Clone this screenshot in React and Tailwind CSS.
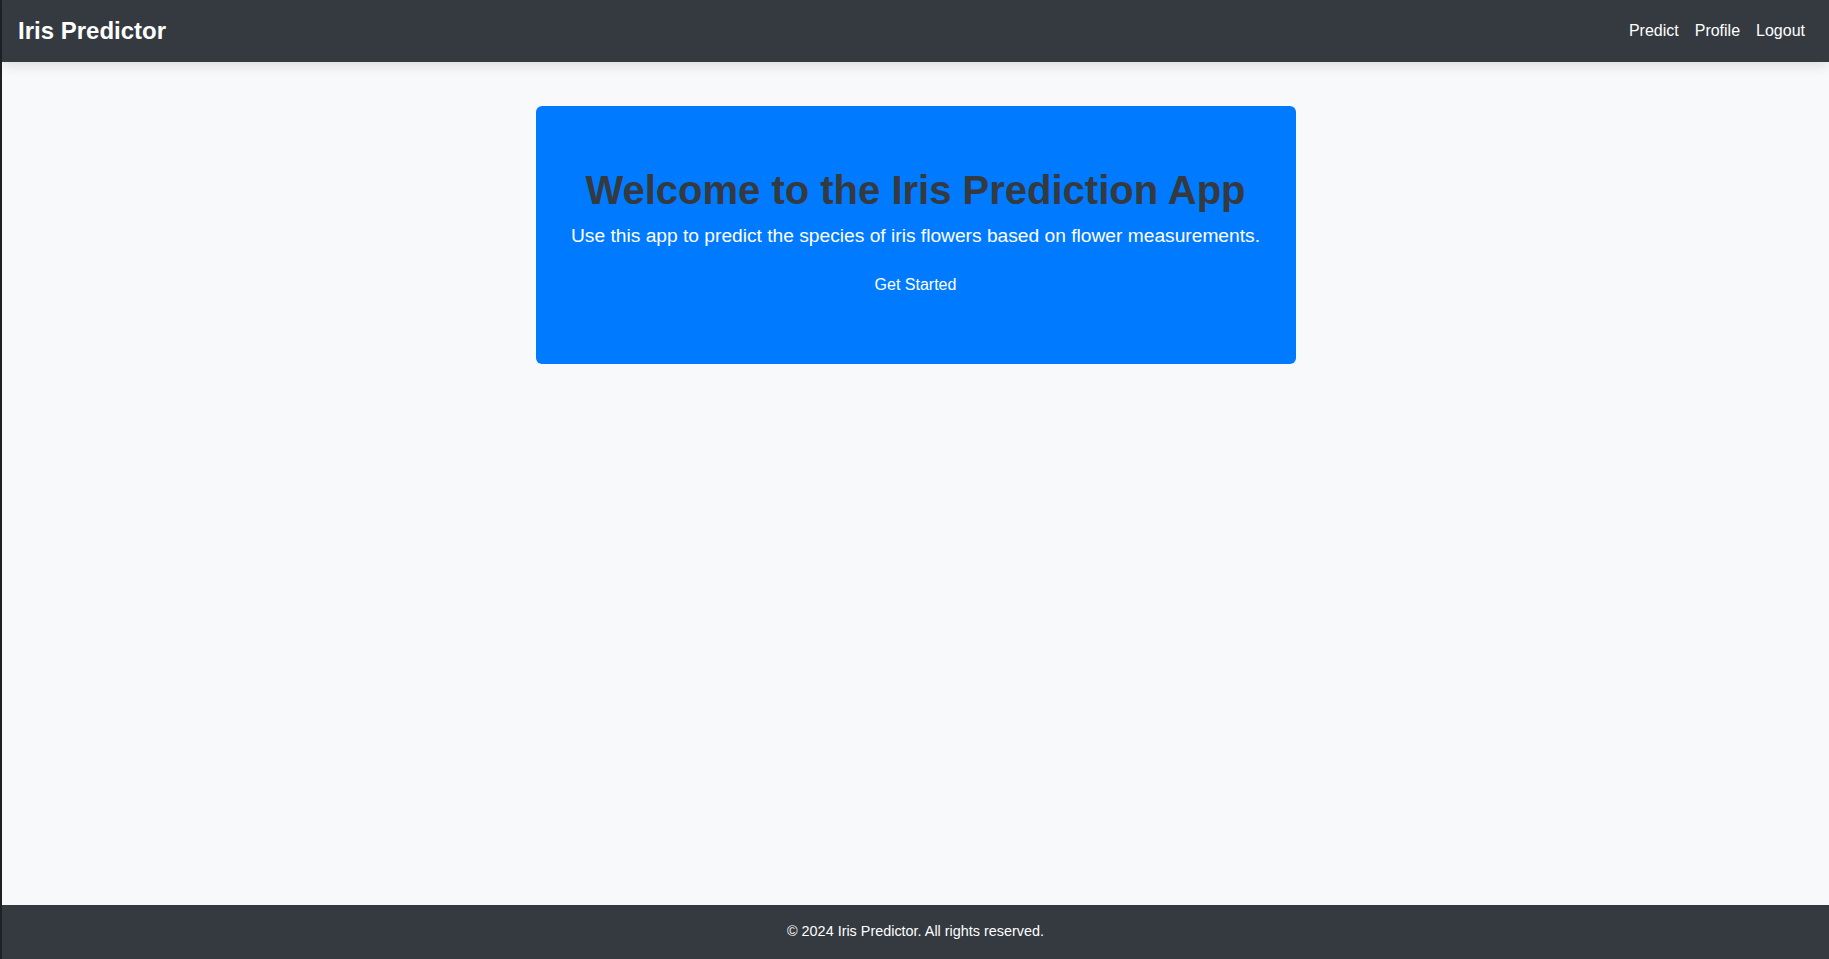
export default function App() {
  return (
    <div
      className="flex h-[959px] flex-col border-l-2 border-[#1f2123] bg-[#f8f9fa]"
      style={{ fontFamily: '"Liberation Sans", Arial, sans-serif' }}
    >
      <nav className="relative z-10 flex h-[62px] shrink-0 items-center justify-between bg-[#343a40] pl-4 pr-6 shadow-[0_3px_12px_rgba(0,0,0,0.12)]">
        <a href="#" className="text-[24px] font-bold text-white">Iris Predictor</a>
        <div className="flex items-center gap-4 text-[16px] text-white">
          <a href="#">Predict</a>
          <a href="#">Profile</a>
          <a href="#">Logout</a>
        </div>
      </nav>

      <main className="flex-1">
        <div className="mx-auto mt-[44px] w-[760px] rounded-md bg-[#007bff] px-4 pt-[60px] pb-[61px] text-center">
          <h1 className="mb-[7px] text-[40px] font-bold leading-[1.2] text-[#343a40]">
            Welcome to the Iris Prediction App
          </h1>
          <p className="mb-4 whitespace-nowrap text-[19.2px] leading-[30px] text-white">
            Use this app to predict the species of iris flowers based on flower measurements.
          </p>
          <button className="px-3 py-1.5 text-[16px] leading-6 text-white">Get Started</button>
        </div>
      </main>

      <footer className="flex h-[54px] shrink-0 items-center justify-center bg-[#343a40] text-[14.4px] text-white">
        © 2024 Iris Predictor. All rights reserved.
      </footer>
    </div>
  )
}
